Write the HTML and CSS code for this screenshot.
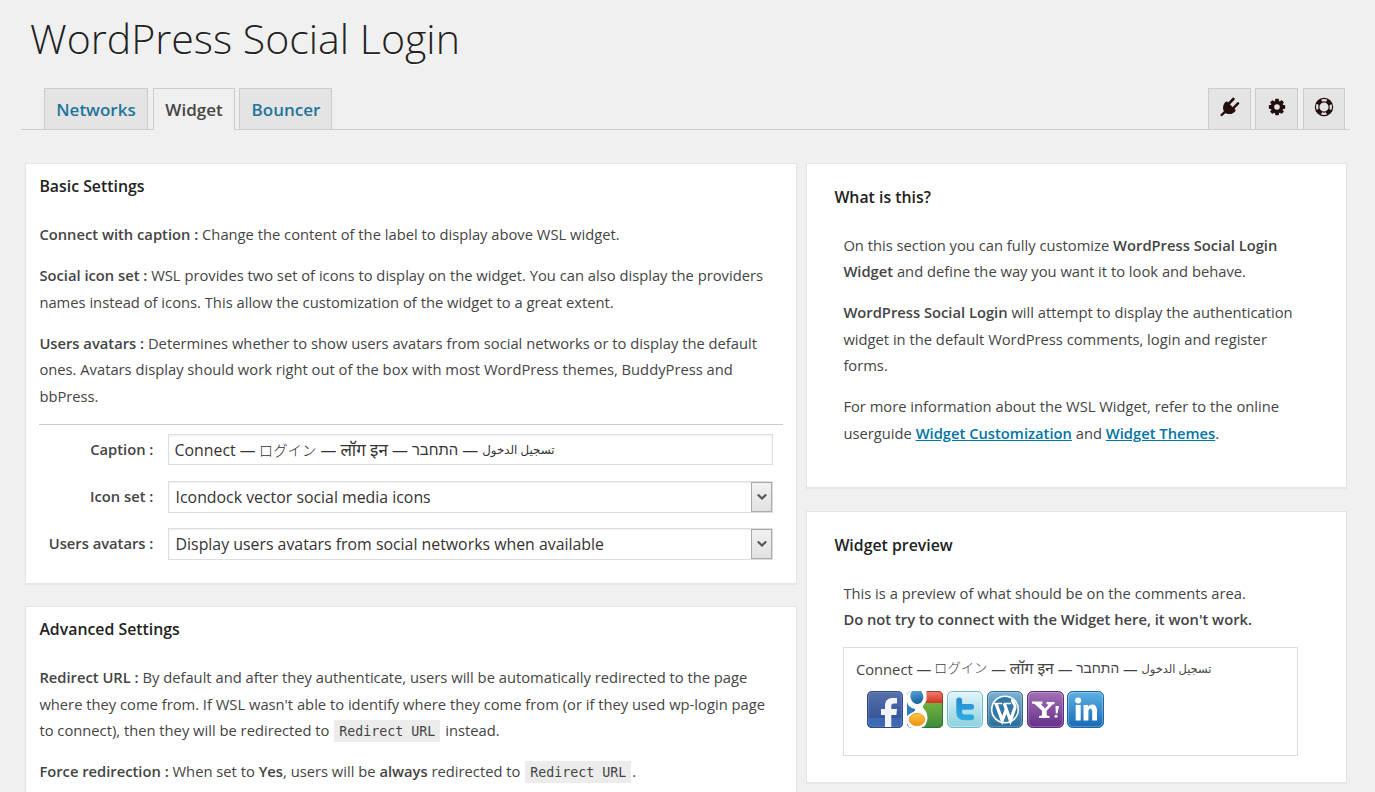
FILE: index.html
```html
<!DOCTYPE html>
<html lang="en">
<head>
<meta charset="utf-8">
<title>WordPress Social Login</title>
<link rel="stylesheet" href="styles.css">
</head>
<body>
<h1 class="title">WordPress Social Login</h1>
<nav class="tabs">
  <a class="tab tab-networks">Networks</a>
  <a class="tab tab-widget active">Widget</a>
  <a class="tab tab-bouncer">Bouncer</a>
  <span class="spacer"></span>
  <a class="tab tool"><svg width="20" height="20" viewBox="0 0 20 20"><g stroke="#230d0d" stroke-linecap="round" fill="none"><path d="M1.600 18L5 14.800" stroke-width="2.400"/><path d="M9 6.500L13.400 2M13.600 10.800L18 6.400" stroke-width="2.600"/></g><path d="M6.800 4.200L15.800 13.200C14.200 17 8.200 18.600 4.800 15.400C1.600 12.200 3 5.800 6.800 4.200Z" fill="#230d0d"/></svg></a>
  <a class="tab tool"><svg width="20" height="20" viewBox="0 0 20 20"><g fill="#230d0d"><rect x="8.1" y="1.8" width="3.8" height="16.4" rx=".8"/><rect x="8.1" y="1.8" width="3.8" height="16.4" rx=".8" transform="rotate(45 10 10)"/><rect x="8.1" y="1.8" width="3.8" height="16.4" rx=".8" transform="rotate(90 10 10)"/><rect x="8.1" y="1.8" width="3.8" height="16.4" rx=".8" transform="rotate(135 10 10)"/><circle cx="10" cy="10" r="6.3"/></g><circle cx="10" cy="10" r="2.8" fill="#e4e4e4"/></svg></a>
  <a class="tab tool last"><svg width="20" height="20" viewBox="0 0 20 20" fill="none"><circle cx="10" cy="10" r="6.800" stroke="#230d0d" stroke-width="4" stroke-dasharray="5.600 5.080" stroke-dashoffset="-2.540"/><circle cx="10" cy="10" r="8.600" stroke="#230d0d" stroke-width="1.200"/><circle cx="10" cy="10" r="5.200" stroke="#230d0d" stroke-width="1.200"/></svg></a>
</nav>
<main class="columns">
  <div class="left">
    <section class="card basic">
      <h2>Basic Settings</h2>
      <p><b>Connect with caption :</b> Change the content of the label to display above WSL widget.</p>
      <p><b>Social icon set :</b> WSL provides two set of icons to display on the widget. You can also display the providers<br>names instead of icons. This allow the customization of the widget to a great extent.</p>
      <p><b>Users avatars :</b> Determines whether to show users avatars from social networks or to display the default<br>ones. Avatars display should work right out of the box with most WordPress themes, BuddyPress and<br>bbPress.</p>
      <div class="form">
        <div class="row"><label>Caption :</label><div class="field caption"><span>Connect — </span><span class="ja">ログイン</span><span> — </span><span class="hi">लॉग इन</span><span> — </span><span class="he">התחבר</span><span> — </span><span class="ar">تسجيل الدخول</span></div></div>
        <div class="row"><label>Icon set :</label><div class="field select"><span>Icondock vector social media icons</span><i class="arrow"><svg width="10" height="8" viewBox="0 0 10 8"><path d="M.8 1.4L5 5.6L9.2 1.4" fill="none" stroke="#555" stroke-width="2.1"/></svg></i></div></div>
        <div class="row"><label>Users avatars :</label><div class="field select"><span>Display users avatars from social networks when available</span><i class="arrow"><svg width="10" height="8" viewBox="0 0 10 8"><path d="M.8 1.4L5 5.6L9.2 1.4" fill="none" stroke="#555" stroke-width="2.1"/></svg></i></div></div>
      </div>
    </section>
    <section class="card advanced">
      <h2>Advanced Settings</h2>
      <p><b>Redirect URL :</b> By default and after they authenticate, users will be automatically redirected to the page<br>where they come from. If WSL wasn't able to identify where they come from (or if they used wp-login page<br>to connect), then they will be redirected to <code>Redirect URL</code> instead.</p>
      <p><b>Force redirection :</b> When set to <b>Yes</b>, users will be <b>always</b> redirected to <code>Redirect URL</code>.</p>
    </section>
  </div>
  <div class="right">
    <section class="card about">
      <h2>What is this?</h2>
      <p>On this section you can fully customize <b>WordPress Social Login<br>Widget</b> and define the way you want it to look and behave.</p>
      <p><b>WordPress Social Login</b> will attempt to display the authentication<br>widget in the default WordPress comments, login and register<br>forms.</p>
      <p>For more information about the WSL Widget, refer to the online<br>userguide <a class="link">Widget Customization</a> and <a class="link">Widget Themes</a>.</p>
    </section>
    <section class="card preview">
      <h2>Widget preview</h2>
      <p>This is a preview of what should be on the comments area.<br><b>Do not try to connect with the Widget here, it won't work.</b></p>
      <div class="box">
        <div class="caption small"><span>Connect — </span><span class="ja">ログイン</span><span> — </span><span class="hi">लॉग इन</span><span> — </span><span class="he">התחבר</span><span> — </span><span class="ar">تسجيل الدخول</span></div>
        <div class="icons">
          <svg viewBox="0 0 37 37"><defs>
            <linearGradient id="fb" x2="0" y2="1"><stop stop-color="#5872ad"/><stop offset="1" stop-color="#2b4a8f"/></linearGradient>
            <linearGradient id="tw" x2="0" y2="1"><stop stop-color="#e2f5fa"/><stop offset="1" stop-color="#8ccfdd"/></linearGradient>
            <linearGradient id="wp" x2="0" y2="1"><stop stop-color="#7fb3d3"/><stop offset="1" stop-color="#266a98"/></linearGradient>
            <linearGradient id="ya" x2="0" y2="1"><stop stop-color="#a470b8"/><stop offset="1" stop-color="#64308a"/></linearGradient>
            <linearGradient id="li" x2="0" y2="1"><stop stop-color="#5fb2e4"/><stop offset="1" stop-color="#1468b4"/></linearGradient>
            <linearGradient id="red" x2="0" y2="1"><stop stop-color="#f08070"/><stop offset="1" stop-color="#d23322"/></linearGradient>
            <linearGradient id="green" x2="0" y2="1"><stop stop-color="#8cc63f"/><stop offset="1" stop-color="#3c8a3a"/></linearGradient>
            <linearGradient id="blue" x2="0" y2="1"><stop stop-color="#5da7d8"/><stop offset="1" stop-color="#145f9f"/></linearGradient>
            <linearGradient id="orange" x2="0" y2="1"><stop stop-color="#ffc840"/><stop offset="1" stop-color="#f09010"/></linearGradient>
            <linearGradient id="bird" x2="0" y2="1"><stop stop-color="#2590d2"/><stop offset="1" stop-color="#2fa8e0"/></linearGradient>
            <clipPath id="tile"><rect width="36" height="37" rx="5"/></clipPath></defs>
            <g clip-path="url(#tile)"><rect width="36" height="37" fill="url(#fb)"/><path d="M0 27H36V37H0Z" fill="#3d69b4"/><path d="M0 35.5H36V37H0Z" fill="#284b8c"/><path d="M18 37V24H14V18H18V15C18 9.500 21 7 26 7H30V12.500H27C25 12.500 24.300 13.500 24.300 15V18H30L29.400 24H24.300V37Z" fill="#f3f5fa"/></g><rect x="1.2" y="1.2" width="33.6" height="34.2" rx="4" fill="none" stroke="#fff" stroke-opacity=".2"/><rect x=".5" y=".5" width="35" height="36" rx="5" fill="none" stroke="#2d4a88"/></svg>
          <svg viewBox="0 0 37 37"><g clip-path="url(#tile)"><rect width="36" height="37" fill="url(#green)"/><path d="M14 0H36V12H18Z" fill="url(#red)"/><path d="M0 0H10V37H0Z" fill="#1c70ae"/><path d="M0 0H19.500C19 3 20 6 19.500 9C19 12 15.500 14 15.800 16C17 19 20.500 20 20.500 27C20 33 17 37 14 37H4C1 36 0 33 0 31V25C4 21 9 21 8 18C3 17 0 14 0 10Z" fill="#fff"/><ellipse cx="9.800" cy="5.500" rx="6.400" ry="7.500" transform="rotate(-14 9.800 5.500)" fill="url(#blue)"/><path d="M0 14C2 17 5 18 7 19C5.500 21.500 2 22 0 24.500Z" fill="#2f7fba"/><ellipse cx="10" cy="28.500" rx="7.800" ry="6.200" fill="url(#orange)" stroke="#e9852c" stroke-width=".7"/></g><path d="M20 .5H31Q35.500.5 35.500 5V12" fill="none" stroke="#a83a30"/><path d="M35.500 12V32Q35.500 36.500 31 36.500H15" fill="none" stroke="#2e7436"/></svg>
          <svg viewBox="0 0 37 37"><rect x=".5" y=".5" width="35" height="36" rx="5" fill="url(#tw)" stroke="#6ab9c6"/><rect x="1.600" y="1.600" width="32.800" height="33.800" rx="4" fill="none" stroke="#fff" stroke-opacity=".4"/><path d="M12.200 9.500V21.500Q12.200 26.300 17.500 26.300H24.200M13 15.800H24.200" fill="none" stroke="url(#bird)" stroke-width="5.800" stroke-linecap="round"/></svg>
          <svg viewBox="0 0 37 37"><rect x=".5" y=".5" width="35" height="36" rx="5" fill="url(#wp)" stroke="#306d95"/><rect x="1.600" y="1.600" width="32.800" height="33.800" rx="4" fill="none" stroke="#fff" stroke-opacity=".25"/><circle cx="18" cy="18.500" r="13.300" fill="#3278a5" stroke="#fff" stroke-width="1.600"/><path d="M7.200 12.500H15.200M16.500 12.500H24" stroke="#fff" stroke-width="1.300"/><path d="M9 12.500L15.200 29.500L19.200 18.500M17.300 12.500L23.400 29.500L28 16.500C29 13 25 12 25.500 8.500" fill="none" stroke="#fff" stroke-width="3.200"/></svg>
          <svg viewBox="0 0 37 37"><rect x=".5" y=".5" width="36" height="36" rx="5" fill="url(#ya)" stroke="#5e2d80"/><rect x="1.600" y="1.600" width="33.800" height="33.800" rx="4" fill="none" stroke="#fff" stroke-opacity=".25"/><path d="M5 10.500H15.500V12.500L13.800 13L18 17.500L21.600 13.700L19.500 13V11H27.500V13L25.500 13.500L19.700 19.800V24.500L22.500 25V27H12V25L15 24.500V19.800L7.700 13L5 12.500Z" fill="#fff"/><path d="M28.500 15H32L30.500 22.500H28.800Z" fill="#fff"/><circle cx="29" cy="25.300" r="1.500" fill="#fff"/></svg>
          <svg viewBox="0 0 37 37"><rect x=".5" y=".5" width="36" height="36" rx="5" fill="url(#li)" stroke="#1b65a5"/><rect x="1.600" y="1.600" width="33.800" height="33.800" rx="4" fill="none" stroke="#fff" stroke-opacity=".3"/><g fill="#fff"><circle cx="11.200" cy="9.500" r="3"/><rect x="8.700" y="14" width="5" height="15.500"/><path d="M16.500 14H21.200V15.800C24 12 30 13 30 19.500V29.500H25.200V20.500C25.200 16.500 21.400 16.500 21.400 20.500V29.500H16.500Z"/></g></svg>
        </div>
      </div>
    </section>
  </div>
</main>
</body>
</html>
```
FILE: styles.css
```css
* { box-sizing: border-box; }
body { margin: 0; height: 792px; overflow: hidden; background: #f0f0f0; color: #444; font: 14.74px/26.65px "Open Sans", sans-serif; white-space: nowrap; }
.title { margin: 0; padding: 9px 0 0 30px; height: 88px; font-size: 41.1px; line-height: 58px; font-weight: 300; color: #222; text-shadow: 0 1px 0 #fff; }
.tabs { display: flex; gap: 4px; height: 42px; margin: 0 25px 0 21px; padding: 0 5px 0 23px; border-bottom: 1px solid #ccc; }
.tab { display: flex; justify-content: center; height: 41px; border: 1px solid #ccc; border-bottom: 0; background: #e4e4e4; color: #21759b; font-size: 17px; line-height: 42px; font-weight: 600; }
.tab-networks { width: 104px; }
.tab-widget { width: 82px; margin-left: 1px; }
.tab-bouncer { width: 93px; padding-left: 1px; }
.active { height: 42px; background: #f0f0f0; color: #464646; }
.spacer { flex: 1; }
.tool { width: 43px; align-items: flex-start; padding-top: 8px; }
.last { width: 42px; margin-left: 1px; }
.columns { display: flex; gap: 9px; padding: 33px 28px 0 25px; }
.left { width: 772px; display: flex; flex-direction: column; gap: 22px; }
.right { width: 541px; display: flex; flex-direction: column; gap: 22px; }
.card { background: #fff; border: 1px solid #e5e5e5; box-shadow: 0 1px 1px rgba(0,0,0,.04); }
.left .card { padding: 9px 13px 0 13.4px; }
.right .card { padding: 20px 27px 0 36.4px; }
.basic { height: 421px; }
.card.advanced { height: 186px; border-bottom: 0; }
.about { height: 325px; margin-bottom: 1px; }
.preview { height: 272px; }
.card h2 { margin: 0 0 22px; font-size: 15.85px; line-height: 26px; font-weight: 600; color: #222; }
.right .card h2 { margin: 0 0 21.5px -9px; }
.card p { margin: 0 0 14.3px; }
.right .card p { margin-bottom: 14.1px; }
b { font-weight: 600; }
.card .link { color: #0074a2; font-weight: 600; text-decoration: underline; }
.form { border-top: 1px solid #ccc; padding: 9px 10px 0 0; display: flex; flex-direction: column; gap: 15px; }
.row { display: flex; gap: 14.6px; height: 32px; }
.row label { width: 114px; text-align: right; font-weight: 600; line-height: 31px; }
.field { flex: 1; display: flex; height: 31px; border: 1px solid #ddd; box-shadow: inset 0 1px 2px rgba(0,0,0,.07); color: #333; font-size: 15.87px; line-height: 31px; padding-left: 5.6px; }
.select { height: 32px; justify-content: space-between; padding-left: 6.6px; }
.arrow { display: flex; align-items: center; justify-content: center; width: 21px; border: 1px solid #aaa; background: linear-gradient(#f1f1f1, #e2e2e2); }
.caption { display: flex; white-space: pre; }
.ja { margin: -1px 0 0 -1px; font-family: "Noto Sans CJK JP", sans-serif; font-weight: 300; font-size: .905em; }
.hi { margin-top: -1px; font-family: "Noto Sans", sans-serif; font-size: 1.065em; }
.he, .ar { font-family: "Liberation Sans", "DejaVu Sans", sans-serif; }
.he { font-size: .935em; }
.ar { font-size: .745em; }
.small .ar { font-size: .775em; }
code { margin: 0 1px; padding: 4px 5px 3px; background: #ececec; font: 13.3px "DejaVu Sans Mono", monospace; }
.box { width: 455px; height: 109px; border: 1px solid #ddd; padding: 8px 12px 0 11.5px; }
.icons { display: flex; gap: 3px; padding: 8px 0 0 11.1px; }
.icons svg { width: 37px; height: 37px; }
.small { height: 27px; }
```
